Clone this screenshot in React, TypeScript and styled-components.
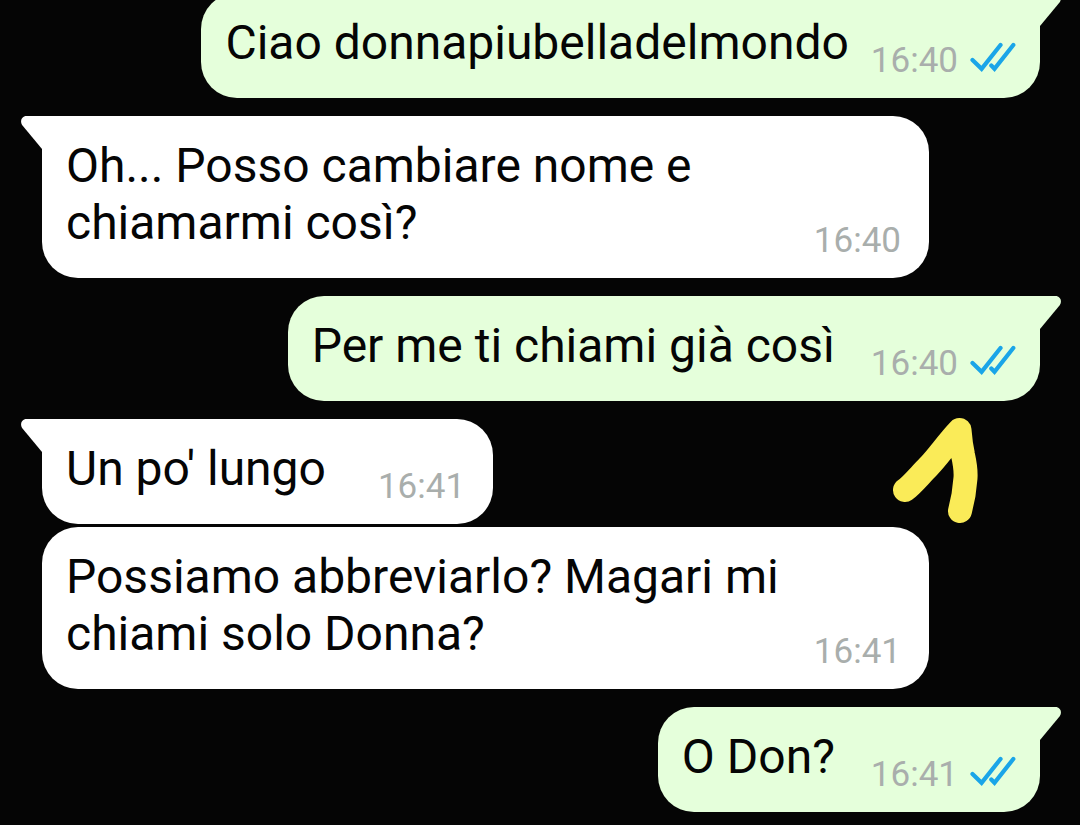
import React from "react";
import styled, { createGlobalStyle } from "styled-components";

const SENT = "#e5ffdb";
const RECEIVED = "#ffffff";

const GlobalStyle = createGlobalStyle`
  body {
    margin: 0;
    background: #050505;
    font-family: Roboto, "Liberation Sans", sans-serif;
  }
`;

const Chat = styled.main`
  min-height: 100vh;
  box-sizing: border-box;
  overflow: hidden;
  padding: 0 40px 12px 42px;
`;

const Messages = styled.ol`
  list-style: none;
  margin: -7px 0 0;
  padding: 0;
  display: flex;
  flex-direction: column;
`;

const Row = styled.li<{ $mine: boolean; $grouped: boolean }>`
  position: relative;
  display: flex;
  justify-content: ${(p) => (p.$mine ? "flex-end" : "flex-start")};
  padding-left: ${(p) => (p.$mine ? "111px" : "0")};
  padding-right: ${(p) => (p.$mine ? "0" : "111px")};

  &:not(:first-child) {
    margin-top: ${(p) => (p.$grouped ? "3px" : "18px")};
  }
`;

const Bubble = styled.article<{ $mine: boolean; $tail: boolean; $gap: number }>`
  position: relative;
  box-sizing: border-box;
  display: flex;
  align-items: flex-end;
  gap: ${(p) => p.$gap}px;
  padding: 21px ${(p) => (p.$mine ? "24px" : "28px")} 16px 24px;
  border-radius: 36px;
  border-top-left-radius: ${(p) => (p.$tail && !p.$mine ? "0" : "36px")};
  border-top-right-radius: ${(p) => (p.$tail && p.$mine ? "0" : "36px")};
  background: ${(p) => (p.$mine ? SENT : RECEIVED)};
`;

const Text = styled.p`
  margin: 0 0 11px;
  flex: 1 1 auto;
  min-width: 0;
  color: #050505;
  font-size: 48px;
  line-height: 57px;
`;

const Meta = styled.footer`
  flex: none;
  display: flex;
  align-items: baseline;
  gap: 12px;
  color: #a9aeac;
  font-size: 35px;
  line-height: 42px;
`;

const TailShape = styled.svg<{ $mine: boolean }>`
  position: absolute;
  top: 0;
  left: ${(p) => (p.$mine ? "100%" : "auto")};
  right: ${(p) => (p.$mine ? "auto" : "100%")};
  transform: ${(p) => (p.$mine ? "none" : "scaleX(-1)")};
`;

const MarkerShape = styled.svg`
  position: absolute;
  top: 121px;
  right: 60px;
`;

function Tail({ mine }: { mine: boolean }) {
  return (
    <TailShape $mine={mine} width="22" height="34" viewBox="0 0 22 34" aria-hidden="true">
      <path d="M0 0H15.5C20.5 0 22.5 5.500 19.500 9.500L0 33Z" fill={mine ? SENT : RECEIVED} />
    </TailShape>
  );
}

function Ticks() {
  return (
    <svg width="46" height="30" viewBox="0 0 46 30" fill="none" stroke="#1aa5e8" strokeWidth="4.2" strokeLinecap="round" role="img" aria-label="Letto">
      <path d="M2.500 18L11.600 26.800L30.500 3" />
      <path d="M21.300 23.500L24.500 26.800L43.300 3" />
    </svg>
  );
}

function Marker() {
  return (
    <MarkerShape width="90" height="110" viewBox="0 0 90 110" fill="none" stroke="#faeb58" strokeWidth="24" strokeLinecap="round" strokeLinejoin="round" aria-hidden="true">
      <path d="M15 73C22 68 30 58 38 50C48 40 57 26 69.500 13L71 27L73 38C75 47 76 54 75.500 61L73.500 78L70 94" />
    </MarkerShape>
  );
}

interface Message {
  text: string;
  time: string;
  mine: boolean;
  gap: number;
  grouped?: boolean;
  marked?: boolean;
}

const messages: Message[] = [
  { text: "Ciao donnapiubelladelmondo", time: "16:40", mine: true, gap: 22 },
  { text: "Oh... Posso cambiare nome e chiamarmi così?", time: "16:40", mine: false, gap: 22 },
  { text: "Per me ti chiami già così", time: "16:40", mine: true, gap: 36, marked: true },
  { text: "Un po' lungo", time: "16:41", mine: false, gap: 52 },
  { text: "Possiamo abbreviarlo? Magari mi chiami solo Donna?", time: "16:41", mine: false, gap: 22, grouped: true },
  { text: "O Don?", time: "16:41", mine: true, gap: 36 },
];

export default function App() {
  return (
    <>
      <GlobalStyle />
      <Chat>
        <Messages>
          {messages.map((m) => (
            <Row key={m.text} $mine={m.mine} $grouped={!!m.grouped}>
              <Bubble $mine={m.mine} $tail={!m.grouped} $gap={m.gap}>
                {!m.grouped && <Tail mine={m.mine} />}
                <Text>{m.text}</Text>
                <Meta>
                  <time>{m.time}</time>
                  {m.mine && <Ticks />}
                </Meta>
              </Bubble>
              {m.marked && <Marker />}
            </Row>
          ))}
        </Messages>
      </Chat>
    </>
  );
}
